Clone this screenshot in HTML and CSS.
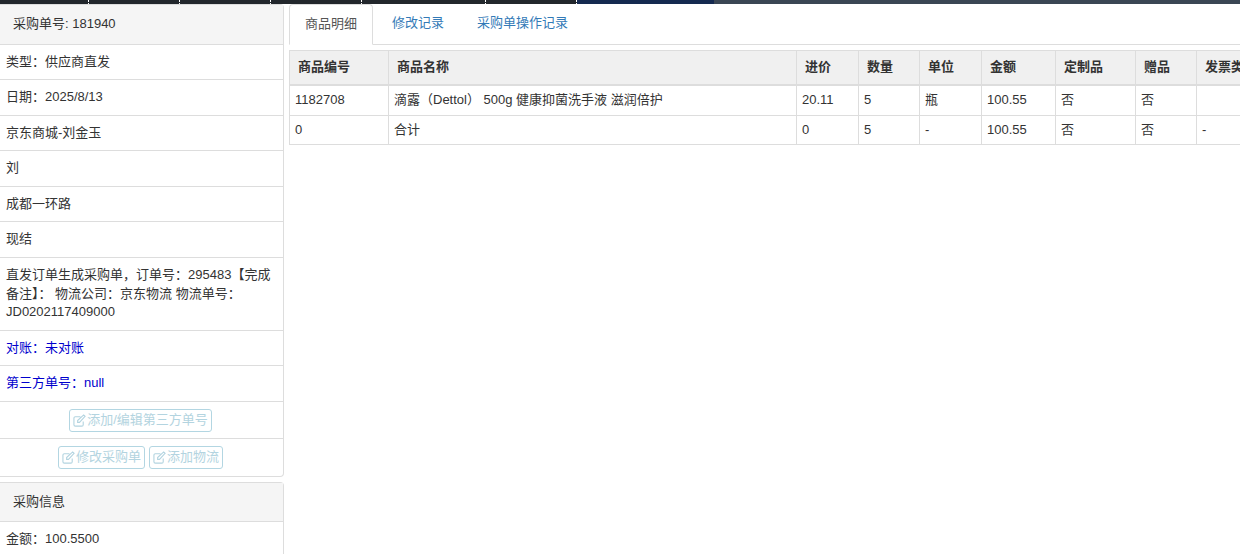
FILE: index.html
```html
<!DOCTYPE html>
<html lang="zh">
<head>
<meta charset="utf-8">
<title>采购单</title>
<link rel="stylesheet" href="styles.css">
</head>
<body>
<div class="topbar">
  <div class="seg w91f"></div><div class="seg w91"></div><div class="seg w91"></div><div class="seg w91"></div><div class="seg w124"></div><div class="seg w91"></div>
  <div class="seg-b"></div><div class="seg-c"></div>
</div>
<div class="page">
  <aside class="side">
    <section class="panel">
      <div class="panel-head">采购单号: 181940</div>
      <div class="row">类型：供应商直发</div>
      <div class="row">日期：2025/8/13</div>
      <div class="row">京东商城-刘金玉</div>
      <div class="row">刘</div>
      <div class="row">成都一环路</div>
      <div class="row">现结</div>
      <div class="row">直发订单生成采购单，订单号：295483【完成备注】： 物流公司：京东物流 物流单号：JD0202117409000</div>
      <div class="row blue">对账：未对账</div>
      <div class="row blue">第三方单号：null</div>
      <div class="row btns">
        <button class="btn"><svg class="ic" viewBox="0 0 14 14"><path d="M11 8v3.500a1.500 1.500 0 0 1-1.500 1.500h-7A1.500 1.500 0 0 1 1 11.500v-7A1.500 1.500 0 0 1 2.500 3H8M5 7l6.500-6 1.500 1.500L7 9H5z"/></svg>添加/编辑第三方单号</button>
      </div>
      <div class="row btns">
        <button class="btn"><svg class="ic" viewBox="0 0 14 14"><path d="M11 8v3.500a1.500 1.500 0 0 1-1.500 1.500h-7A1.500 1.500 0 0 1 1 11.500v-7A1.500 1.500 0 0 1 2.500 3H8M5 7l6.500-6 1.500 1.500L7 9H5z"/></svg>修改采购单</button>
        <button class="btn"><svg class="ic" viewBox="0 0 14 14"><path d="M11 8v3.500a1.500 1.500 0 0 1-1.500 1.500h-7A1.500 1.500 0 0 1 1 11.500v-7A1.500 1.500 0 0 1 2.500 3H8M5 7l6.500-6 1.500 1.500L7 9H5z"/></svg>添加物流</button>
      </div>
    </section>
    <section class="panel">
      <div class="panel-head">采购信息</div>
      <div class="row">金额：100.5500</div>
    </section>
  </aside>
  <main class="main">
    <nav class="tabs">
      <a class="tab active">商品明细</a>
      <a class="tab">修改记录</a>
      <a class="tab">采购单操作记录</a>
    </nav>
    <div class="table-wrap">
      <table class="grid">
        <colgroup>
          <col class="c1"><col class="c2"><col class="c3"><col class="c4"><col class="c5"><col class="c6"><col class="c7"><col class="c8"><col class="c9">
        </colgroup>
        <thead>
          <tr><th>商品编号</th><th>商品名称</th><th>进价</th><th>数量</th><th>单位</th><th>金额</th><th>定制品</th><th>赠品</th><th>发票类型</th></tr>
        </thead>
        <tbody>
          <tr><td>1182708</td><td>滴露（Dettol） 500g 健康抑菌洗手液 滋润倍护</td><td>20.11</td><td>5</td><td>瓶</td><td>100.55</td><td>否</td><td>否</td><td></td></tr>
          <tr><td>0</td><td>合计</td><td>0</td><td>5</td><td>-</td><td>100.55</td><td>否</td><td>否</td><td>-</td></tr>
        </tbody>
      </table>
    </div>
  </main>
</div>
</body>
</html>
```

FILE: styles.css
```css
* { box-sizing: border-box; }
html, body { margin: 0; padding: 0; height: 554px; overflow: hidden; background: #fff; }
body { font-family: "Liberation Sans", Arial, "Noto Sans CJK SC", sans-serif; font-size: 13px; line-height: 1.42857; color: #333; }
.topbar { display: flex; height: 4px; background: #3a4654; }
.seg { background: #22272c; border-right: 1px dotted #fff; }
.w91f { width: 89px; }
.w91 { width: 91px; }
.w124 { width: 124px; }
.seg-b { width: 137px; background: #152a50; }
.seg-c { flex: 1; }
.page { display: flex; align-items: flex-start; }
.side { width: 284px; flex: none; }
.panel { border: 1px solid #ddd; border-left: 0; border-top-right-radius: 4px; border-bottom-right-radius: 4px; margin-bottom: 5px; background: #fff; }
.panel-head { padding: 10px 13px; background: #f5f5f5; border-bottom: 1px solid #ddd; }
.row { padding: 8px 6px; border-bottom: 1px solid #ddd; }
.row:last-child { border-bottom: 0; }
.blue { color: #0000cd; }
.btns { display: flex; justify-content: center; gap: 4px; padding: 7px 2px 6px 0; }
.btns:last-child { padding-bottom: 7px; }
.btn { display: flex; align-items: center; height: 23px; padding: 0 3px; font: inherit; color: #b3d4e0; background: #fff; border: 1px solid #b3d6e2; border-radius: 3px; }
.ic { width: 13px; height: 13px; margin-right: 1px; fill: none; stroke: #b3d4e0; stroke-width: 1.200; }
.main { flex: 1; min-width: 0; padding-left: 5px; }
.tabs { display: flex; height: 41px; border-bottom: 1px solid #ddd; }
.tab { padding: 10px 16px 0; margin-right: 1px; color: #337ab7; height: 40px; }
.tab.active { padding: 10px 15px 0; margin-right: 3px; height: 41px; color: #555; border: 1px solid #ddd; border-bottom-color: #fff; border-radius: 4px 4px 0 0; }
.table-wrap { margin-top: 5px; width: 951px; overflow: hidden; }
.grid { table-layout: fixed; width: 1000px; border-collapse: collapse; }
.c1 { width: 99px; } .c2 { width: 408px; } .c3 { width: 62px; } .c4 { width: 61px; } .c5 { width: 62px; } .c6 { width: 74px; } .c7 { width: 80px; } .c8 { width: 61px; } .c9 { width: 93px; }
.grid th, .grid td { border: 1px solid #ddd; text-align: left; white-space: nowrap; overflow: hidden; }
.grid th { height: 34px; padding: 0 8px; background: #f0f0f0; border-bottom-width: 2px; font-weight: bold; }
.grid td { height: 29px; padding: 0 5px; }
.grid tbody tr:first-child td { height: 31px; }
```
